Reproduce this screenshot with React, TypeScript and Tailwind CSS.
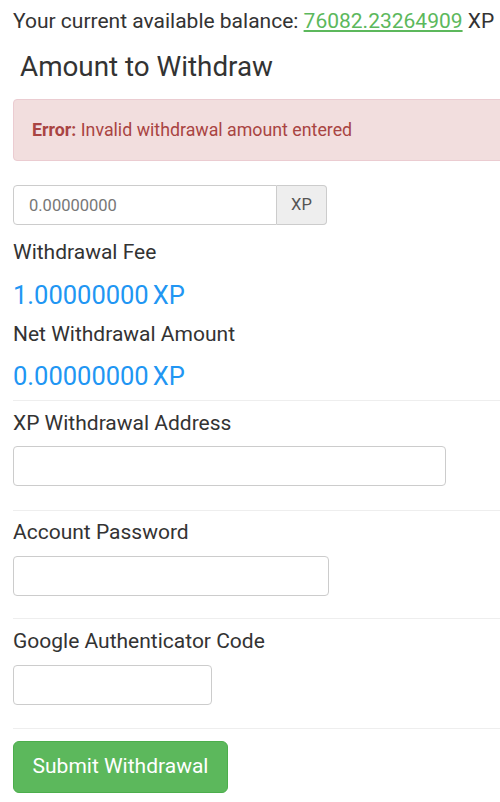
export default function App() {
  return (
    <div className="w-[500px] h-[802px] overflow-hidden bg-white text-[#333] font-['Roboto',sans-serif]">
      <div className="pl-[13px]">
        <p className="text-[21px] leading-[26px] pt-[8px] whitespace-nowrap">
          Your current available balance:{" "}
          <a className="text-[#5cb85c] underline">76082.23264909</a> XP
        </p>
        <h3 className="text-[27.8px] leading-[32px] mt-[17px] pl-[7px]">Amount to Withdraw</h3>

        <div className="mt-[16px] w-[500px] h-[62px] flex items-center pl-[18px] bg-[#f2dede] border border-[#ebccd1] rounded-[4px] text-[#a94442] text-[17.8px]">
          <span>
            <b className="font-bold">Error:</b> Invalid withdrawal amount entered
          </span>
        </div>

        <div className="mt-[24px] flex w-[314px] h-[40px]">
          <input
            className="w-[264px] h-full border border-[#ccc] rounded-l-[4px] px-[15px] text-[16.5px] placeholder:text-[#777] outline-none"
            placeholder="0.00000000"
          />
          <span className="w-[50px] h-full flex items-center justify-center bg-[#eee] border border-l-0 border-[#ccc] rounded-r-[4px] text-[16.5px] text-[#555]">
            XP
          </span>
        </div>

        <p className="text-[21px] leading-[26px] mt-[14px]">Withdrawal Fee</p>
        <p className="text-[25.5px] leading-[30px] mt-[15px] text-[#2196f3]">
          1.00000000<span className="ml-[4px]">XP</span>
        </p>
        <p className="text-[21px] leading-[26px] mt-[11px]">Net Withdrawal Amount</p>
        <p className="text-[25.5px] leading-[30px] mt-[14px] text-[#2196f3]">
          0.00000000<span className="ml-[4px]">XP</span>
        </p>

        <hr className="mt-[9px] border-t border-[#eee]" />

        <p className="text-[21px] leading-[26px] mt-[9px]">XP Withdrawal Address</p>
        <input className="block mt-[10px] w-[433px] h-[40px] border border-[#ccc] rounded-[4px] outline-none" />

        <hr className="mt-[24px] border-t border-[#eee]" />

        <p className="text-[21px] leading-[26px] mt-[8px]">Account Password</p>
        <input className="block mt-[11px] w-[316px] h-[40px] border border-[#ccc] rounded-[4px] outline-none" />

        <hr className="mt-[22px] border-t border-[#eee]" />

        <p className="text-[21px] leading-[26px] mt-[9px]">Google Authenticator Code</p>
        <input className="block mt-[11px] w-[199px] h-[40px] border border-[#ccc] rounded-[4px] outline-none" />

        <hr className="mt-[23px] border-t border-[#eee]" />

        <button className="mt-[12px] w-[215px] h-[52px] bg-[#5cb85c] border border-[#4cae4c] rounded-[6px] text-white text-[21px]">
          Submit Withdrawal
        </button>
      </div>
    </div>
  );
}
